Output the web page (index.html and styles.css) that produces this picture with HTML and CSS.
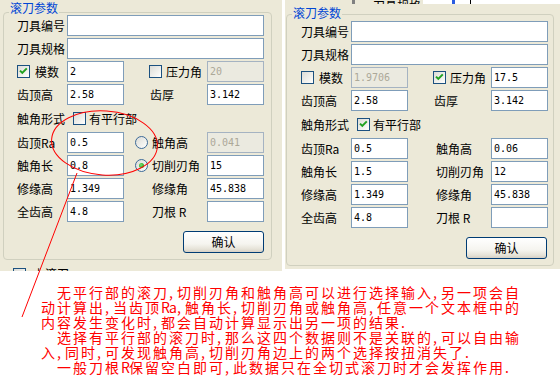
FILE: index.html
```html
<!DOCTYPE html>
<html lang="zh">
<head>
<meta charset="utf-8">
<title>滚刀参数</title>
<link rel="stylesheet" href="styles.css">
</head>
<body>
<div class="page">
  <div class="shots">
    <div class="panel panel-left">
      <div class="group group-left">
        <span class="group-title title-left">滚刀参数</span>
        <div class="row"><span class="lbl">刀具编号</span><span class="tb tb-wide"></span></div>
        <div class="row"><span class="lbl">刀具规格</span><span class="tb tb-wide"></span></div>
        <div class="row">
          <span class="lbl"><span class="cb on"><svg viewBox="0 0 11 11" width="11" height="11"><path d="M2 4.6 L4.3 6.9 L8.8 2.4" fill="none" stroke="#21a121" stroke-width="2"/></svg></span>模数</span>
          <span class="tb">2</span>
          <span class="mid mid-cb"><span class="cb"></span>压力角</span>
          <span class="tb dis">20</span>
        </div>
        <div class="row">
          <span class="lbl">齿顶高</span><span class="tb">2.58</span>
          <span class="mid mid-plain2">齿厚</span><span class="tb">3.142</span>
        </div>
        <div class="row row-check">
          <span class="lbl-wide">触角形式</span><span class="cb cb-form"></span><span>有平行部</span>
        </div>
        <div class="row">
          <span class="lbl">齿顶Ra</span><span class="tb">0.5</span>
          <span class="mid mid-rb"><span class="rb"></span>触角高</span><span class="tb dis">0.041</span>
        </div>
        <div class="row">
          <span class="lbl">触角长</span><span class="tb">0.8</span>
          <span class="mid mid-rb"><span class="rb on"><span class="dot"></span></span>切削刃角</span><span class="tb">15</span>
        </div>
        <div class="row">
          <span class="lbl">修缘高</span><span class="tb">1.349</span>
          <span class="mid mid-plain">修缘角</span><span class="tb">45.838</span>
        </div>
        <div class="row">
          <span class="lbl">全齿高</span><span class="tb">4.8</span>
          <span class="mid mid-plain">刀根 R</span><span class="tb"></span>
        </div>
        <div class="btn">确认</div>
      </div>
      <div class="below"><span class="cb"></span><span>上滚刀</span></div>
    </div>

    <div class="panel panel-right">
      <div class="strip">
        <div class="strip-beige"><span class="bar-gray"></span><span class="cut-text">刀具规格</span></div>
        <div class="strip-white"><span class="bar-blue"></span><span class="bar-black"></span></div>
      </div>
      <div class="group group-right">
        <span class="group-title title-right">滚刀参数</span>
        <div class="row"><span class="lbl">刀具编号</span><span class="tb tb-wide"></span></div>
        <div class="row"><span class="lbl">刀具规格</span><span class="tb tb-wide"></span></div>
        <div class="row">
          <span class="lbl"><span class="cb"></span>模数</span>
          <span class="tb dis">1.9706</span>
          <span class="mid mid-cb"><span class="cb on"><svg viewBox="0 0 11 11" width="11" height="11"><path d="M2 4.6 L4.3 6.9 L8.8 2.4" fill="none" stroke="#21a121" stroke-width="2"/></svg></span>压力角</span>
          <span class="tb">17.5</span>
        </div>
        <div class="row">
          <span class="lbl">齿顶高</span><span class="tb">2.58</span>
          <span class="mid mid-plain2">齿厚</span><span class="tb">3.142</span>
        </div>
        <div class="row row-check">
          <span class="lbl-wide">触角形式</span><span class="cb cb-form on"><svg viewBox="0 0 11 11" width="11" height="11"><path d="M2 4.6 L4.3 6.9 L8.8 2.4" fill="none" stroke="#21a121" stroke-width="2"/></svg></span><span>有平行部</span>
        </div>
        <div class="row">
          <span class="lbl">齿顶Ra</span><span class="tb">0.5</span>
          <span class="mid mid-plain">触角高</span><span class="tb">0.06</span>
        </div>
        <div class="row">
          <span class="lbl">触角长</span><span class="tb">1.5</span>
          <span class="mid mid-plain">切削刃角</span><span class="tb">12</span>
        </div>
        <div class="row">
          <span class="lbl">修缘高</span><span class="tb">1.349</span>
          <span class="mid mid-plain">修缘角</span><span class="tb">45.838</span>
        </div>
        <div class="row">
          <span class="lbl">全齿高</span><span class="tb">4.8</span>
          <span class="mid mid-plain">刀根 R</span><span class="tb"></span>
        </div>
        <div class="btn">确认</div>
      </div>
    </div>
  </div>

  <div class="note">
    <div class="line indent">无平行部的滚刀<span class="h">,</span>切削刃角和触角高可以进行选择输入<span class="h">,</span>另一项会自</div>
    <div class="line">动计算出<span class="h">,</span>当齿顶<span class="h">R</span><span class="h">a</span><span class="h">,</span>触角长<span class="h">,</span>切削刃角或触角高<span class="h">,</span>任意一个文本框中的</div>
    <div class="line">内容发生变化时<span class="h">,</span>都会自动计算显示出另一项的结果<span class="h">.</span></div>
    <div class="line indent">选择有平行部的滚刀时<span class="h">,</span>那么这四个数据则不是关联的<span class="h">,</span>可以自由输</div>
    <div class="line">入<span class="h">,</span>同时<span class="h">,</span>可发现触角高<span class="h">,</span>切削刃角边上的两个选择按扭消失了<span class="h">.</span></div>
    <div class="line indent">一般刀根<span class="h">R</span>保留空白即可<span class="h">,</span>此数据只在全切式滚刀时才会发挥作用<span class="h">.</span></div>
  </div>

  <svg class="annot" width="560" height="388" viewBox="0 0 560 388">
    <ellipse cx="104.5" cy="143" rx="53" ry="32" transform="rotate(4 104.5 143)" fill="none" stroke="#ff0000" stroke-width="1"/>
    <line x1="77" y1="173" x2="22" y2="317" stroke="#ff0000" stroke-width="1"/>
  </svg>
</div>
</body>
</html>
```

FILE: styles.css
```css
html, body {
  margin: 0;
  padding: 0;
  background: #ffffff;
}

.page {
  position: relative;
  width: 560px;
  height: 388px;
  overflow: hidden;
  font-family: "Noto Sans CJK SC", sans-serif;
  font-size: 12px;
  color: #000000;
}

.shots {
  display: flex;
  gap: 3px;
  height: 271px;
  align-items: flex-start;
}

.panel {
  background: #ece9d8;
  overflow: hidden;
}

.panel-left {
  width: 282px;
  height: 271px;
}

.panel-right {
  width: 275px;
  height: 269px;
}

/* group box */
.group {
  position: relative;
  box-sizing: border-box;
  border: 1px solid #d0d0bf;
  border-radius: 4px;
  display: flex;
  flex-direction: column;
  gap: 2px;
}

.group-left {
  width: 269px;
  margin: 12px 0 0 3px;
  padding: 2px 6px 6px 13px;
}

.group-right {
  width: 268px;
  margin: 10px 0 0 1px;
  padding: 6px 5px 6px 14px;
}

.group-title {
  position: absolute;
  left: 5px;
  padding: 0 1px;
  background: #ece9d8;
  color: #0046d5;
  font-size: 12px;
  line-height: 14px;
}

.title-left { top: -12px; }
.title-right { top: -9px; }

/* rows */
.row {
  display: grid;
  grid-template-columns: 50px 57px 83px 57px;
  height: 21px;
  align-items: center;
  line-height: 14px;
}

.lbl {
  display: flex;
  align-items: center;
  white-space: nowrap;
}

.tb {
  box-sizing: border-box;
  height: 21px;
  border: 1px solid #7f9db9;
  background: #ffffff;
  padding: 0 0 0 2px;
  font-family: "DejaVu Sans Mono", monospace;
  font-size: 10px;
  line-height: 19px;
  color: #000000;
  white-space: nowrap;
  overflow: hidden;
}

.tb-wide {
  grid-column: 2 / 5;
}

.tb.dis {
  background: #ebeae0;
  border-color: #a5b3c2;
  color: #aca899;
}

.mid {
  display: flex;
  align-items: center;
  white-space: nowrap;
}

.mid-cb { padding-left: 25px; }
.mid-cb .cb { margin-right: 4px; }
.mid-rb { padding-left: 11px; }
.mid-rb .rb { margin-right: 4px; }
.mid-plain { padding-left: 28px; }
.mid-plain2 { padding-left: 26px; }

.lbl .cb { margin-right: 5px; }

.row-check {
  display: flex;
  align-items: center;
  height: 23px;
}

.lbl-wide {
  width: 48px;
  white-space: nowrap;
}

.cb-form {
  margin: 0 3px 0 8px;
}

/* checkbox */
.cb {
  flex: none;
  box-sizing: border-box;
  width: 13px;
  height: 13px;
  border: 1px solid #1c5180;
  background: linear-gradient(135deg, #dcdcd7 0%, #f4f4f1 70%, #ffffff 100%);
  display: inline-flex;
  align-items: center;
  justify-content: center;
}

.cb svg {
  display: block;
}

/* radio */
.rb {
  flex: none;
  box-sizing: border-box;
  width: 13px;
  height: 13px;
  border-radius: 50%;
  border: 1px solid #3c6a98;
  background: linear-gradient(135deg, #dcdcd7 0%, #f4f4f1 70%, #ffffff 100%);
  display: inline-flex;
  align-items: center;
  justify-content: center;
}

.rb .dot {
  width: 5px;
  height: 5px;
  border-radius: 50%;
  background: radial-gradient(circle at 40% 40%, #7ee07a 0%, #2fb22b 60%, #1a8a18 100%);
}

/* button */
.btn {
  align-self: flex-end;
  box-sizing: border-box;
  width: 81px;
  height: 22px;
  margin: 7px 1px 0 0;
  border: 1px solid #003c74;
  border-radius: 3px;
  background: linear-gradient(#ffffff 0%, #f5f4ef 60%, #e6e3d8 85%, #d6d0c5 100%);
  display: flex;
  align-items: center;
  justify-content: center;
  line-height: 14px;
}

/* bits below the left group */
.below {
  display: flex;
  align-items: center;
  gap: 7px;
  margin: 7px 0 0 13px;
  line-height: 14px;
}

/* cropped strip on top of the right shot */
.strip {
  display: flex;
  height: 4px;
  overflow: hidden;
}

.strip-beige {
  width: 138px;
  display: flex;
  align-items: flex-end;
}

.bar-gray {
  width: 3px;
  height: 4px;
  margin-left: 67px;
  background: #808080;
}

.cut-text {
  margin-left: 18px;
  font-size: 12px;
  line-height: 14px;
  height: 14px;
  transform: translateY(9px);
  white-space: nowrap;
}

.strip-white {
  flex: 1;
  background: #ffffff;
  display: flex;
}

.bar-blue {
  width: 3px;
  height: 4px;
  margin-left: 29px;
  background: #2a5ce0;
}

.bar-black {
  width: 1px;
  height: 4px;
  margin-left: 15px;
  background: #000000;
}

/* red note */
.note {
  margin-top: 14px;
  padding-left: 41px;
  color: #ff0000;
  font-family: "Noto Sans CJK SC", sans-serif;
  font-size: 14px;
  letter-spacing: 2px;
  line-height: 15px;
}

.line {
  white-space: nowrap;
  height: 15px;
}

.indent {
  padding-left: 16px;
}

.h {
  display: inline-block;
  width: 8px;
  letter-spacing: 0;
}

/* annotation overlay */
.annot {
  position: absolute;
  left: 0;
  top: 0;
  pointer-events: none;
}
```
